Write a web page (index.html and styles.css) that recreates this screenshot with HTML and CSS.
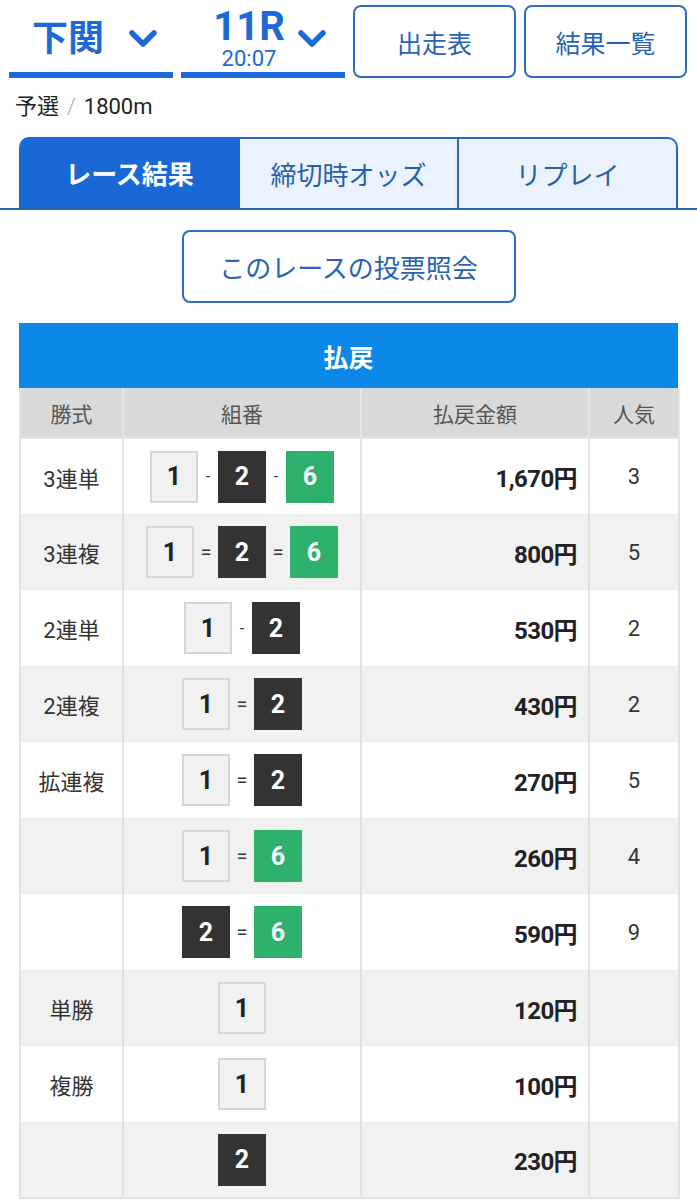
FILE: index.html
```html
<!DOCTYPE html>
<html lang="ja">
<head>
<meta charset="utf-8">
<title>レース結果</title>
<link rel="stylesheet" href="styles.css">
</head>
<body>
<div class="topbar">
  <div class="sel">
    <span class="sel-place">下関</span>
    <svg class="chev" viewBox="0 0 30 20" width="30" height="20"><path d="M4 4 L15 15 L26 4" /></svg>
  </div>
  <div class="sel sel-race">
    <span class="race-stack"><span class="race-no">11R</span><span class="race-time">20:07</span></span>
    <svg class="chev" viewBox="0 0 30 20" width="30" height="20"><path d="M4 4 L15 15 L26 4" /></svg>
  </div>
  <a class="btn">出走表</a>
  <a class="btn">結果一覧</a>
</div>

<div class="meta">予選<span class="slash">/</span>1800m</div>

<div class="tabs">
  <div class="tab tab-active">レース結果</div>
  <div class="tab">締切時オッズ</div>
  <div class="tab tab-last">リプレイ</div>
</div>

<div class="vote-wrap"><a class="btn vote">このレースの投票照会</a></div>

<div class="payout">
  <div class="payout-title">払戻</div>
  <table class="ptable">
    <colgroup><col class="c1"><col class="c2"><col class="c3"><col class="c4"></colgroup>
    <thead>
      <tr><th>勝式</th><th>組番</th><th>払戻金額</th><th>人気</th></tr>
    </thead>
    <tbody>
      <tr><td class="kind">3連単</td><td class="combo"><span class="boat b1">1</span><span class="sep">-</span><span class="boat b2">2</span><span class="sep">-</span><span class="boat b6">6</span></td><td class="amt">1,670円</td><td class="pop">3</td></tr>
      <tr><td class="kind">3連複</td><td class="combo"><span class="boat b1">1</span><span class="sep eq">=</span><span class="boat b2">2</span><span class="sep eq">=</span><span class="boat b6">6</span></td><td class="amt">800円</td><td class="pop">5</td></tr>
      <tr><td class="kind">2連単</td><td class="combo"><span class="boat b1">1</span><span class="sep">-</span><span class="boat b2">2</span></td><td class="amt">530円</td><td class="pop">2</td></tr>
      <tr><td class="kind">2連複</td><td class="combo"><span class="boat b1">1</span><span class="sep eq">=</span><span class="boat b2">2</span></td><td class="amt">430円</td><td class="pop">2</td></tr>
      <tr><td class="kind">拡連複</td><td class="combo"><span class="boat b1">1</span><span class="sep eq">=</span><span class="boat b2">2</span></td><td class="amt">270円</td><td class="pop">5</td></tr>
      <tr><td class="kind"></td><td class="combo"><span class="boat b1">1</span><span class="sep eq">=</span><span class="boat b6">6</span></td><td class="amt">260円</td><td class="pop">4</td></tr>
      <tr><td class="kind"></td><td class="combo"><span class="boat b2">2</span><span class="sep eq">=</span><span class="boat b6">6</span></td><td class="amt">590円</td><td class="pop">9</td></tr>
      <tr><td class="kind">単勝</td><td class="combo"><span class="boat b1">1</span></td><td class="amt">120円</td><td class="pop"></td></tr>
      <tr><td class="kind">複勝</td><td class="combo"><span class="boat b1">1</span></td><td class="amt">100円</td><td class="pop"></td></tr>
      <tr><td class="kind"></td><td class="combo"><span class="boat b2">2</span></td><td class="amt">230円</td><td class="pop"></td></tr>
    </tbody>
  </table>
</div>
</body>
</html>
```

FILE: styles.css
```css
* { box-sizing: border-box; }
html, body { margin: 0; padding: 0; background: #fff; }
body {
  font-family: Roboto, "Noto Sans CJK JP", "Noto Sans", sans-serif;
  color: #222;
  width: 697px;
}

.topbar {
  display: flex;
  gap: 8px;
  padding: 5px 9px 0 9px;
  height: 78px;
}
.sel {
  flex: 0 0 164px;
  display: flex;
  align-items: center;
  justify-content: center;
  gap: 24px;
  border-bottom: 6px solid #1c6ad6;
  color: #1c6ad6;
}
.topbar .btn { flex: 0 0 163px; }
.sel-place {
  font-size: 36px;
  font-weight: 700;
  line-height: 1;
  margin-left: 8px;
}
.chev { display: block; }
.chev path {
  fill: none;
  stroke: #1c6ad6;
  stroke-width: 5.5;
  stroke-linecap: round;
  stroke-linejoin: round;
}
.sel-race { gap: 12px; }
.race-stack {
  display: flex;
  flex-direction: column;
  align-items: center;
  margin-left: 14px;
}
.race-no {
  font-size: 40px;
  font-weight: 700;
  line-height: 38px;
}
.race-time {
  font-size: 22px;
  line-height: 22px;
  margin-top: 2px;
}
.btn {
  display: flex;
  align-items: center;
  justify-content: center;
  border: 2px solid #2f6cc2;
  border-radius: 8px;
  color: #2763b4;
  font-size: 25px;
  text-decoration: none;
  background: #fff;
}

.meta {
  margin-top: 14px;
  padding-left: 15px;
  font-size: 22px;
  line-height: 30px;
  color: #222;
}
.slash {
  color: #aaa;
  margin: 0 8px;
  font-weight: 300;
}

.tabs {
  margin-top: 15px;
  display: flex;
  padding: 0 19px;
  border-bottom: 2px solid #2d66b8;
  height: 73px;
}
.tab {
  flex: 1;
  display: flex;
  align-items: center;
  justify-content: center;
  background: #eaf3fd;
  color: #2a5fa8;
  font-size: 26px;
  border-top: 2px solid #2d66b8;
  border-right: 2px solid #2d66b8;
}
.tab-active {
  background: #1a67d6;
  color: #fff;
  font-weight: 700;
  border: none;
  border-top-left-radius: 10px;
  flex: 0 0 221px;
}
.tab-last {
  border-top-right-radius: 10px;
}

.vote-wrap {
  display: flex;
  justify-content: center;
  margin-top: 20px;
}
.vote {
  flex: 0 0 334px;
  height: 73px;
  font-size: 26px;
}

.payout {
  margin: 20px 19px 0 19px;
}
.payout-title {
  background: #0c89e8;
  color: #fff;
  font-weight: 700;
  font-size: 25px;
  height: 65px;
  display: flex;
  align-items: center;
  justify-content: center;
}
.ptable {
  width: 659px;
  border-collapse: collapse;
  table-layout: fixed;
}
.c1 { width: 103px; }
.c2 { width: 238px; }
.c3 { width: 228px; }
.c4 { width: 90px; }
.ptable th {
  background: #d9d9d9;
  color: #555;
  font-weight: 400;
  font-size: 21px;
  height: 50px;
  border: 2px solid #e4e4e4;
  border-top: none;
}
.ptable td {
  height: 76px;
  border-left: 2px solid #e2e2e2;
  border-right: 2px solid #e2e2e2;
  padding: 0;
  vertical-align: middle;
}
.ptable tbody tr:nth-child(even) td { background: #f1f1f1; }
.ptable tbody tr:last-child td { border-bottom: 2px solid #e2e2e2; }
.kind {
  text-align: center;
  font-size: 22px;
  color: #333;
}
.combo {
  text-align: center;
  font-size: 0;
}
.boat {
  display: inline-flex;
  align-items: center;
  justify-content: center;
  width: 48px;
  height: 52px;
  vertical-align: middle;
  font-size: 25px;
  font-weight: 700;
}
.b1 { background: #f1f1f1; border: 2px solid #d6d6d6; color: #222; }
.b2 { background: #333; color: #fff; }
.b6 { background: #2eb16c; color: #fff; }
.sep {
  display: inline-block;
  vertical-align: middle;
  width: 20px;
  font-size: 16px;
  color: #333;
  text-align: center;
}
.sep.eq { width: 24px; font-size: 20px; }
.amt {
  text-align: right;
  padding-right: 11px !important;
  font-size: 24px;
  font-weight: 700;
  letter-spacing: -0.6px;
  color: #222;
}
.pop {
  text-align: center;
  font-size: 22px;
  color: #333;
}
```
